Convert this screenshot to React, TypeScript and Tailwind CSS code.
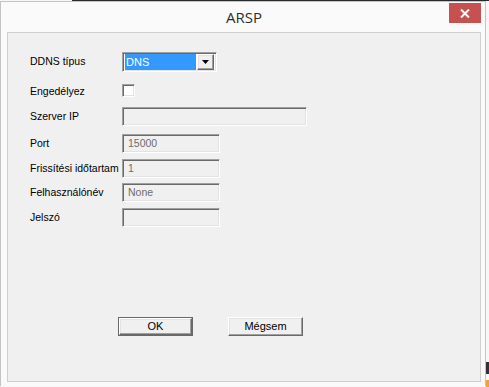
const sunken =
  "border border-t-[#a0a0a0] border-l-[#a0a0a0] border-b-white border-r-white shadow-[inset_1px_1px_0_#696969,inset_-1px_-1px_0_#e3e3e3]";

const raised =
  "border border-t-white border-l-white border-b-[#696969] border-r-[#696969] shadow-[inset_-1px_-1px_0_#a0a0a0,inset_1px_1px_0_#e3e3e3]";

const Field = (props: { label: string; value?: string; width: string; top: string }) => {
  const { label, value, width, top } = props;
  return (
    <div className={`flex items-center h-[19px] ${top}`}>
      <div className="w-[114px] shrink-0 pl-[22px] whitespace-nowrap">{label}</div>
      <div className={`h-[19px] shrink-0 ${width} ${sunken} bg-[#f0f0f0] flex items-center pl-[5px] text-[#6d6d6d]`}>
        {value}
      </div>
    </div>
  );
};

const App = () => {
  return (
    <div className="w-[489px] h-[387px] bg-[#f7f7f7] overflow-hidden relative" style={{ fontFamily: "'Liberation Sans', Arial, sans-serif" }}>
      <div className="absolute left-[72px] top-0 w-[420px] h-[1px] bg-[#2a2a2a]" />
      <div className="absolute left-[486px] top-[362px] w-[3px] h-[12px] bg-[#333]" />
      <div className="absolute left-[486px] top-[380px] w-[3px] h-[7px] bg-[#e8a33a]" />

      {/* window */}
      <div className="mt-[1px] w-[486px] h-[385px] bg-[#fafafa] border-l border-t border-r border-[#c4c4c4] relative flex flex-col">
        <div className="h-[30px] flex items-center justify-center text-[15px] text-[#2e2e2e] pl-[2px]" style={{ fontFamily: "'Open Sans', 'Noto Sans', sans-serif" }}>
          ARSP
        </div>
        <div className="absolute top-[1px] right-[4px] w-[32px] h-[20px] bg-[#c75050] flex items-center justify-center">
          <svg width="10" height="9" viewBox="0 0 10 9">
            <path d="M1 0.5 L9 8.5 M9 0.5 L1 8.5" stroke="white" strokeWidth="2" />
          </svg>
        </div>

        {/* client area */}
        <div className="ml-[6px] w-[474px] h-[350px] bg-[#f0f0f0] border border-[#cfcfcf] text-[10.5px] text-black flex flex-col">
          <div className="flex items-center h-[20px] mt-[19px]">
            <div className="w-[114px] shrink-0 pl-[22px]">DDNS típus</div>
            <div className={`h-[20px] w-[95px] shrink-0 ${sunken} bg-white flex items-center p-[2px] gap-[1px]`}>
              <div className="flex-1 h-[16px] bg-[#3399ff] text-white flex items-center pl-[1px] text-[11px]">DNS</div>
              <div className={`w-[17px] h-[16px] bg-[#f0f0f0] ${raised} flex items-center justify-center`}>
                <svg width="7" height="4" viewBox="0 0 7 4">
                  <path d="M0 0 H7 L3.5 4 Z" fill="black" />
                </svg>
              </div>
            </div>
          </div>

          <div className="flex items-center h-[13px] mt-[12px]">
            <div className="w-[114px] shrink-0 pl-[22px] mt-[3px]">Engedélyez</div>
            <div className={`w-[13px] h-[13px] shrink-0 bg-white ${sunken}`} />
          </div>

          <Field label="Szerver IP" width="w-[185px]" top="mt-[10px]" />
          <Field label="Port" value="15000" width="w-[98px]" top="mt-[8px]" />
          <Field label="Frissítési időtartam" value="1" width="w-[98px]" top="mt-[6px]" />
          <Field label="Felhasználónév" value="None" width="w-[98px]" top="mt-[5px]" />
          <Field label="Jelszó" width="w-[98px]" top="mt-[6px]" />

          <div className="flex mt-[90px] pl-[110px] gap-[35px] text-[11px]">
            <div className="w-[75px] h-[19px] border border-[#696969]">
              <div className={`w-full h-full bg-[#f0f0f0] ${raised} flex items-center justify-center`}>OK</div>
            </div>
            <div className={`w-[75px] h-[19px] bg-[#f0f0f0] ${raised} flex items-center justify-center`}>Mégsem</div>
          </div>
        </div>
      </div>
    </div>
  );
};

export default App;
